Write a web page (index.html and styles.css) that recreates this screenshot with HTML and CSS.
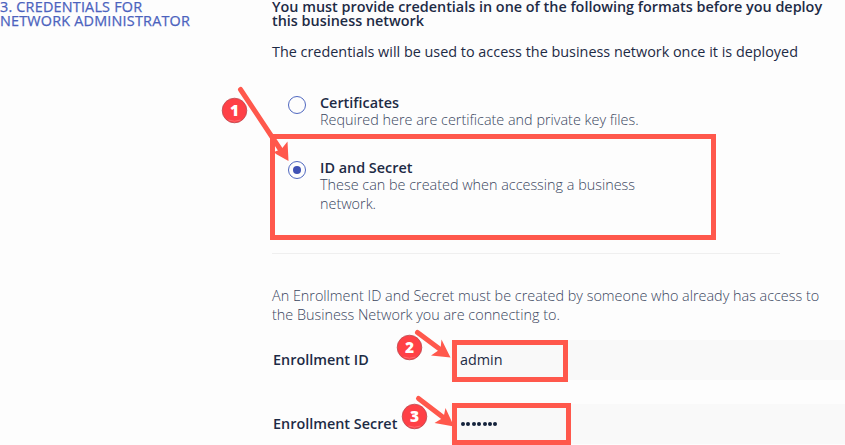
FILE: index.html
```html
<!DOCTYPE html>
<html lang="en">
<head>
<meta charset="utf-8">
<title>Network administrator credentials</title>
<link rel="stylesheet" href="styles.css">
</head>
<body>
<main class="page">
  <h2 class="step-title">3. CREDENTIALS FOR<br>NETWORK ADMINISTRATOR</h2>
  <section class="content">
    <h3 class="heading">You must provide credentials in one of the following formats before you deploy<br>this business network</h3>
    <p class="intro">The credentials will be used to access the business network once it is deployed</p>
    <div class="options">
      <div class="option">
        <span class="radio"></span>
        <div><div class="option-title">Certificates</div><p class="light">Required here are certificate and private key files.</p></div>
      </div>
      <div class="option">
        <span class="radio checked"></span>
        <div><div class="option-title">ID and Secret</div><p class="light">These can be created when accessing a business<br>network.</p></div>
      </div>
    </div>
    <hr class="rule">
    <p class="light note">An Enrollment ID and Secret must be created by someone who already has access to<br>the Business Network you are connecting to.</p>
    <div class="field"><span class="label">Enrollment ID</span><div class="input">admin</div></div>
    <div class="field"><span class="label">Enrollment Secret</span><div class="input"><span class="dots"><i></i><i></i><i></i><i></i><i></i><i></i><i></i></span></div></div>
  </section>
  <svg class="marks" viewBox="0 0 845 445" width="845" height="445">
    <g class="frames">
      <rect x="272.5" y="136.500" width="441" height="101"/>
      <rect x="454.500" y="342.500" width="111" height="37"/>
      <rect x="454.500" y="405.500" width="114" height="37"/>
    </g>
    <g class="shafts">
      <path d="M240.500 89.500L280 149"/>
      <path d="M417.500 332.500L441 350"/>
      <path d="M418.500 398.500L444 418"/>
    </g>
    <g class="heads">
      <path d="M288.500 161L287.500 141.500L281.500 149L274 152L276 154Z"/>
      <path d="M450.500 357.500L441.500 339.500L440.500 349L431 355.500Z"/>
      <path d="M454 426.500L445.500 408L443.500 417.500L434.500 423Z"/>
    </g>
    <g class="badges">
      <circle cx="234.500" cy="110.500" r="12.300"/>
      <circle cx="409.500" cy="347.500" r="12.300"/>
      <circle cx="414.500" cy="416.500" r="12.300"/>
    </g>
    <g class="shines">
      <path d="M228.500 120q6 2.500 12 0M403.500 357q6 2.500 12 0M408.500 426q6 2.500 12 0"/>
    </g>
    <g class="digits">
      <text x="234.500" y="116">1</text>
      <text x="409.500" y="353">2</text>
      <text x="414.500" y="422">3</text>
    </g>
  </svg>
</main>
</body>
</html>
```
FILE: styles.css
```css
* { box-sizing: border-box; margin: 0; padding: 0; }
body {
  background: #fdfdfd;
  color: #1d2b45;
  font: 400 14.4px/19px "Open Sans", sans-serif;
}
.page {
  position: relative;
  display: flex;
  width: 845px;
  height: 445px;
  overflow: hidden;
  white-space: nowrap;
}
.step-title {
  width: 272px;
  flex: none;
  color: #4b62bd;
  font-size: 14.4px;
  font-weight: 500;
  line-height: 14px;
  letter-spacing: 0.2px;
  -webkit-text-stroke: 0.25px #4b62bd;
}
.content { width: 573px; flex: none; }
.heading { font-size: 14.4px; font-weight: 600; line-height: 14px; }
.intro { margin-top: 14px; }
.options { display: grid; gap: 28px; margin-top: 33px; padding-left: 16px; }
.option { display: flex; gap: 14px; height: 37px; }
.radio {
  display: flex;
  align-items: center;
  justify-content: center;
  width: 18px;
  height: 18px;
  margin-top: 2px;
  border: 1px solid #5068c0;
  border-radius: 50%;
}
.checked::before {
  content: "";
  width: 8px;
  height: 8px;
  border-radius: 50%;
  background: #3f51b5;
}
.option-title { height: 16px; font-weight: 600; line-height: 17px; }
.light { color: #3a465e; font-weight: 300; }
.rule { width: 508px; margin-top: 57px; border: 0; border-top: 1px solid #efefef; }
.note { margin-top: 32px; }
.field { display: flex; align-items: center; height: 40px; margin-top: 16px; }
.field + .field { margin-top: 24px; }
.label { width: 178px; padding: 0 0 2px 1px; font-weight: 600; }
.input { display: flex; align-items: center; width: 395px; height: 40px; padding: 0 0 2px 10px; background: #f9f9f9; }
.dots { display: flex; gap: 1.400px; padding: 2px 0 0 1px; }
.dots i { width: 4px; height: 4px; border-radius: 50%; background: #14233c; }
.marks { position: absolute; inset: 0; }
.frames { fill: none; stroke: #ff584c; stroke-width: 5; }
.shafts { fill: none; stroke: #ff584c; stroke-width: 5; stroke-linecap: round; }
.heads { fill: #ff584c; }
.badges { fill: #ff4046; stroke: #b94a50; stroke-width: 0.800; }
.shines { fill: none; stroke: #ff6a6e; stroke-width: 1; }
.digits { fill: #fff; font: 800 15.5px "Open Sans", sans-serif; text-anchor: middle; }
```
